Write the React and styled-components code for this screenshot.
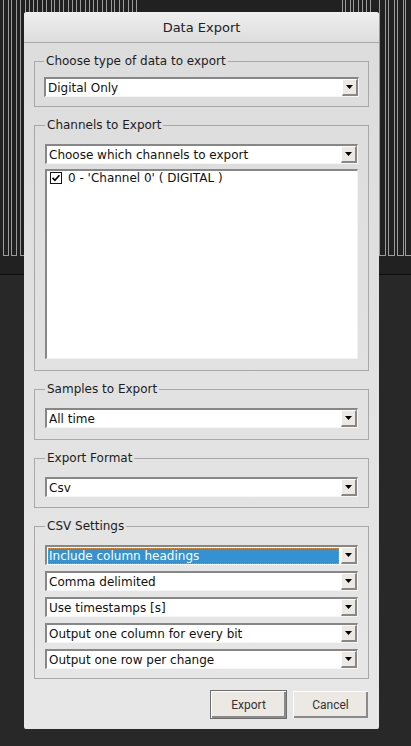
import React from "react";
import styled, { createGlobalStyle } from "styled-components";

const Global = createGlobalStyle`
  html, body { margin: 0; padding: 0; background: #262626; }
  * { box-sizing: border-box; }
`;

const Screen = styled.div`
  position: relative;
  width: 411px;
  height: 746px;
  overflow: hidden;
  display: flex;
  flex-direction: column;
  background: #282828;
`;

const TraceArea = styled.div`
  height: 274px;
  background: #212121;
  flex: none;
`;

const Divider = styled.div`
  height: 1px;
  background: #0c0c0c;
  flex: none;
`;

const LowerPanel = styled.div`
  flex: 1;
  background: #282828;
`;

const Dialog = styled.div`
  position: absolute;
  left: 24px;
  top: 12px;
  width: 355px;
  border-radius: 3px 3px 2px 2px;
  overflow: hidden;
  display: flex;
  flex-direction: column;
  background: linear-gradient(#dcdcdc, #e7e7e7);
`;

const TitleBar = styled.div`
  height: 31px;
  border-bottom: 1px solid #a9a9a9;
  background: linear-gradient(#efefef, #dddddd);
  display: flex;
  align-items: center;
  justify-content: center;
  font: 13px "DejaVu Sans", sans-serif;
  color: #222;
`;

const Body = styled.div`
  display: flex;
  flex-direction: column;
  gap: 11px;
  padding: 11px 10px 10px;
`;

const Group = styled.fieldset`
  margin: 0;
  min-width: 0;
  border: 1px solid #a8a8a8;
  padding: ${(p) => p.$top}px ${(p) => p.$side}px ${(p) => p.$bottom}px;
  display: flex;
  flex-direction: column;
  gap: ${(p) => p.$gap}px;
`;

const Legend = styled.legend`
  padding: 0 2px;
  margin: 0;
  font: 12px/14px "DejaVu Sans", sans-serif;
  color: #1c1c1c;
`;

const Combo = styled.div`
  display: flex;
  height: 20px;
  background: #fff;
  border-style: solid;
  border-width: 2px 1px 1px 2px;
  border-color: #878787 #f6f6f6 #f6f6f6 #878787;
`;

const ComboValue = styled.div`
  flex: 1;
  min-width: 0;
  padding-left: ${(p) => (p.$selected ? 1 : 2)}px;
  padding-top: ${(p) => (p.$selected ? 0 : 1)}px;
  margin: ${(p) => (p.$selected ? "1px 2px 0 1px" : "0")};
  font: 12px/${(p) => (p.$selected ? 16 : 16)}px "DejaVu Sans", sans-serif;
  color: ${(p) => (p.$selected ? "#fff" : "#111")};
  background: ${(p) => (p.$selected ? "#3491d2" : "transparent")};
  outline: ${(p) => (p.$selected ? "1px dotted #e5832c" : "none")};
  outline-offset: -1px;
  white-space: nowrap;
  overflow: hidden;
`;

const DropButton = styled.div`
  width: 16px;
  flex: none;
  background: #ece9e5;
  border-style: solid;
  border-width: 1px 2px 2px 1px;
  border-color: #fdfdfd #878787 #878787 #fdfdfd;
  display: flex;
  align-items: center;
  justify-content: center;
`;

const ListBox = styled.div`
  height: 190px;
  background: #fff;
  border-style: solid;
  border-width: 2px 1px 1px 2px;
  border-color: #878787 #f2f2f0 #f2f2f0 #878787;
  padding: 0 3px;
`;

const ListItem = styled.div`
  display: flex;
  align-items: center;
  gap: 6px;
  height: 14px;
  font: 12px "DejaVu Sans", sans-serif;
  color: #111;
`;

const ButtonRow = styled.div`
  display: flex;
  justify-content: flex-end;
  align-items: center;
  gap: 6px;
  padding-right: 1px;
`;

const Button = styled.button`
  width: ${(p) => (p.$default ? 77 : 75)}px;
  height: ${(p) => (p.$default ? 29 : 27)}px;
  padding: 0;
  font: 12px "Roboto", sans-serif;
  color: #333;
  background: #ece9e5;
  border: ${(p) => (p.$default ? "1px solid #6e6e6e" : "none")};
  box-shadow: inset 1px 1px #fdfdfd, inset -2px -2px #8a8a8a;
`;

const Arrow = () => (
  <svg width="7" height="4" viewBox="0 0 7 4">
    <polygon points="0,0 7,0 3.5,4" fill="#000" />
  </svg>
);

const Check = () => (
  <svg width="12" height="12" viewBox="0 0 12 12">
    <rect x="0.5" y="0.5" width="11" height="11" fill="#fff" stroke="#111" />
    <path d="M2.6 5.8 L4.9 8.3 L9.4 3.2" fill="none" stroke="#000" strokeWidth="1.7" />
  </svg>
);

const ComboBox = ({ children, selected }) => (
  <Combo>
    <ComboValue $selected={selected}>{children}</ComboValue>
    <DropButton>
      <Arrow />
    </DropButton>
  </Combo>
);

const leftPulses = [];
for (let x = 2.7; x < 140; x += 8.6) leftPulses.push([x, x + 4.8]);
const rightPulses = [
  [342, 345], [350, 353], [358, 362], [366, 370],
  [379, 385], [388, 394], [397, 403], [405, 411],
];

const Traces = () => {
  const d = [...leftPulses, ...rightPulses]
    .map(([a, b]) => {
      const x1 = Math.round(a) + 0.5;
      const x2 = Math.round(b) + 0.5;
      return `M${x1} -2 V255.5 H${x2} V-2`;
    })
    .join(" ");
  return (
    <svg width="411" height="274" style={{ display: "block" }}>
      <path d={d} fill="none" stroke="#9c9c9c" strokeWidth="1" shapeRendering="crispEdges" />
    </svg>
  );
};

export default function App() {
  return (
    <Screen>
      <Global />
      <TraceArea>
        <Traces />
      </TraceArea>
      <Divider />
      <LowerPanel />
      <Dialog>
        <TitleBar>Data Export</TitleBar>
        <Body>
          <Group $top={9} $bottom={9} $side={9} $gap={6}>
            <Legend>Choose type of data to export</Legend>
            <ComboBox>Digital Only</ComboBox>
          </Group>
          <Group $top={12} $bottom={11} $side={10} $gap={5}>
            <Legend>Channels to Export</Legend>
            <ComboBox>Choose which channels to export</ComboBox>
            <ListBox>
              <ListItem>
                <Check />
                0 - 'Channel 0' ( DIGITAL )
              </ListItem>
            </ListBox>
          </Group>
          <Group $top={12} $bottom={11} $side={10} $gap={6}>
            <Legend>Samples to Export</Legend>
            <ComboBox>All time</ComboBox>
          </Group>
          <Group $top={12} $bottom={10} $side={10} $gap={6}>
            <Legend>Export Format</Legend>
            <ComboBox>Csv</ComboBox>
          </Group>
          <Group $top={12} $bottom={9} $side={10} $gap={6}>
            <Legend>CSV Settings</Legend>
            <ComboBox selected>Include column headings</ComboBox>
            <ComboBox>Comma delimited</ComboBox>
            <ComboBox>Use timestamps [s]</ComboBox>
            <ComboBox>Output one column for every bit</ComboBox>
            <ComboBox>Output one row per change</ComboBox>
          </Group>
          <ButtonRow>
            <Button $default>Export</Button>
            <Button>Cancel</Button>
          </ButtonRow>
        </Body>
      </Dialog>
    </Screen>
  );
}
